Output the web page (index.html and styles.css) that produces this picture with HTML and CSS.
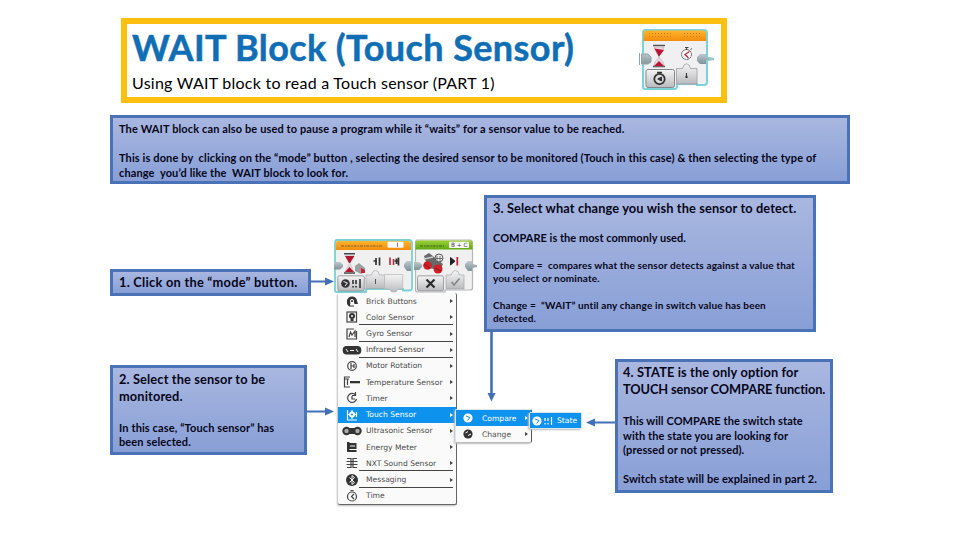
FILE: index.html
```html
<!DOCTYPE html>
<html lang="en">
<head>
    <meta charset="UTF-8">
    <meta name="viewport" content="width=device-width, initial-scale=1.0">
    <title>WAIT Block (Touch Sensor)</title>
    <link rel="stylesheet" href="styles.css">
</head>
<body>
    <div class="slide">
        <header class="header">
            <div class="titles">
                <h1>WAIT Block (Touch Sensor)</h1>
                <p class="subtitle">Using WAIT block to read a Touch sensor (PART 1)</p>
            </div>
            <svg class="wait-block" viewBox="638 26 90 68">
                <defs>
                    <linearGradient id="orange" x1="0" y1="0" x2="0" y2="1">
                        <stop offset="0" stop-color="#ffb52e"/>
                        <stop offset="1" stop-color="#f28c0c"/>
                    </linearGradient>
                    <linearGradient id="green" x1="0" y1="0" x2="0" y2="1">
                        <stop offset="0" stop-color="#9bd136"/>
                        <stop offset="1" stop-color="#5fa814"/>
                    </linearGradient>
                    <linearGradient id="grey" x1="0" y1="0" x2="0" y2="1">
                        <stop offset="0" stop-color="#f4f4f4"/>
                        <stop offset=".5" stop-color="#d9d9db"/>
                        <stop offset="1" stop-color="#b9babd"/>
                    </linearGradient>
                    <linearGradient id="plug" x1="0" y1="0" x2="0" y2="1">
                        <stop offset="0" stop-color="#bfc9cd"/>
                        <stop offset="1" stop-color="#7f9198"/>
                    </linearGradient>
                </defs>
                <path d="M645 30H704Q707 30 707 33V82Q707 85 704 85H697V84H677V87Q677 89 674 89H645Q643 89 643 87V33Q643 30 645 30Z" fill="#f0f0f2" stroke="#79d3d8" stroke-width="2"/>
                <path d="M643.500 41V33Q643.500 30.500 646 30.500H703Q706 30.500 706 33V41Z" fill="url(#orange)"/>
                <path d="M649 33.500H672M649 36.500H672M684 33.500H701M684 36.500H701" stroke="#c87b1c" stroke-width="1" stroke-dasharray="1 2"/>
                <path d="M639.500 53V65M641.500 54H648L651 57V62L648 64H641.500Z" fill="url(#plug)" stroke="#90a4aa" stroke-width="1"/>
                <path d="M697 57L700 54H706V57.500L714 58V60L706 61V64H700L697 61Z" fill="url(#plug)"/>
                <path d="M706 57L714 58.500L706 61" fill="none" stroke="#8fd3d5" stroke-width="1.200"/>
                <!-- hourglass -->
                <path d="M653 45.500H665" stroke="#555" stroke-width="1.500"/>
                <path d="M653 66.500H665" stroke="#555" stroke-width="1.500"/>
                <path d="M654 47H664L663 50L659.500 55.500V58L663 62L664 66H654L655 62L658.500 58V55.500L655 50Z" fill="#ead8df" stroke="#a9a0a5" stroke-width=".5"/>
                <path d="M654.500 48.500L664 50L659.500 56H658.500ZM654 66L659 61L664 66Z" fill="#bb1538"/>
                <!-- stopwatch -->
                <circle cx="686.500" cy="54.500" r="5" fill="#f8f8f8" stroke="#55585a" stroke-width="1" stroke-dasharray="2 .6"/>
                <path d="M685 47.500H688.500M686.500 48V50M690.500 49.500L692 48.500" stroke="#444" stroke-width="1"/>
                <path d="M689.500 51.500L685 54.500L688.500 58" fill="none" stroke="#b62a47" stroke-width="1.300"/>
                <!-- mode button -->
                <rect x="646" y="69.500" width="28.500" height="18" rx="2" fill="url(#grey)" stroke="#85878a" stroke-width="1"/>
                <circle cx="659.500" cy="79" r="5.200" fill="#d9d9d9" stroke="#333" stroke-width="1.800"/>
                <path d="M657 72.500H662M659.500 72.500V74" stroke="#333" stroke-width="1.400"/>
                <path d="M661.500 77L657.800 79L661.500 81Z" fill="#333" stroke="#333"/>
                <path d="M676.500 68.500H682.500L684 65Q686.500 62.500 689 65L690.500 68.500H697V84H676.500Z" fill="url(#grey)" stroke="#9a9da0" stroke-width=".8"/>
                <path d="M686.500 73V78M685 77H688" stroke="#333" stroke-width="1.100"/>
            </svg>
        </header>

        <section class="callout intro">
            <p class="md">The WAIT block can also be used to pause a program while it “waits” for a sensor value to be reached.</p>
            <p class="md gap">This is done by&nbsp; clicking on the “mode” button , selecting the desired sensor to be monitored (Touch in this case) &amp; then selecting the type of<br>change&nbsp; you’d like the&nbsp; WAIT block to look for.</p>
        </section>

        <main class="steps">
            <div class="left">
                <section class="callout step1">
                    <p class="lg">1. Click on the “mode” button.</p>
                </section>
                <section class="callout step2">
                    <p class="lg">2. Select the sensor to be<br>monitored.</p>
                    <p class="md gap">In this case, “Touch sensor” has<br>been selected.</p>
                </section>
            </div>

            <div class="program">
                <svg class="blocks" viewBox="330 236 152 57">
                    <!-- wait block -->
                    <path d="M337 240H409Q412 240 412 243V288Q412 290.500 409 290.500H403V289H366V292H337Q335 292 335 290V243Q335 240 337 240Z" fill="#f0f0f1" stroke="#7bd0d3" stroke-width="1.800"/>
                    <path d="M335.800 250V243Q335.800 241 338 241H409Q411 241 411 243V250Z" fill="url(#orange)"/>
                    <path d="M341 246H383" stroke="#a9762c" stroke-width="1.300" stroke-dasharray="3 1 1.500 .800"/>
                    <rect x="387.500" y="241.700" width="16" height="6" rx="1" fill="#fafafa"/>
                    <path d="M397.500 242.800V246.800" stroke="#555" stroke-width=".8"/>
                    <path d="M334 262H340L343 264.500V267L340 269.500H334Z" fill="url(#plug)"/>
                    <path d="M404 264L407 261H411V271H407L404 267Z" fill="url(#plug)"/>
                    <path d="M344 253.800H355M344 273H355" stroke="#444" stroke-width="1.500"/>
                    <path d="M345 255H354L350.500 262V264L354 272H345L349 264V262Z" fill="#ecdce1" stroke="#aaa" stroke-width=".4"/>
                    <path d="M345 256H354.500L350 263H349ZM345 272L349.500 267L354 272Z" fill="#b3152f"/>
                    <path d="M355 266L359 263L365 268V272L361 274L355 271Z" fill="#9d9ea0"/>
                    <path d="M361 268L365 270V273L361 273Z" fill="#c52336"/>
                    <path d="M373.500 261H377M376 258V265M379.500 257.500V265.500" stroke="#333" stroke-width="1.700"/>
                    <path d="M390 257.500V265M393.500 259V265" stroke="#b52a3c" stroke-width="1.600"/>
                    <path d="M394.500 261H398M396.500 258.500V264M398.500 257.500V265.500" fill="none" stroke="#333" stroke-width="1.700"/>
                    <rect x="337.800" y="275.800" width="26.500" height="15" rx="1.500" fill="url(#grey)" stroke="#8c8e90" stroke-width=".8"/>
                    <circle cx="345.500" cy="283.500" r="4.300" fill="#333"/>
                    <path d="M343.500 281.500L347.500 283L345 286" fill="none" stroke="#eee" stroke-width="1"/>
                    <path d="M353 280V284M353 286V287.500M356 280V284M356 286V287.500M360 279V288" stroke="#333" stroke-width="1.600"/>
                    <path d="M366 275H371.500L373 271.500Q375.500 269.500 378 271.500L379.500 275H384.500V288.500H366Z" fill="url(#grey)" stroke="#a5a7a9" stroke-width=".7"/>
                    <path d="M375.500 279V284" stroke="#555" stroke-width="1"/>
                    <path d="M384.500 274.500H402.700V289H398L396 292H391.500L389.500 289H384.500Z" fill="url(#grey)" stroke="#b5b6b8" stroke-width=".7"/>
                    <!-- motor block -->
                    <path d="M417 240H470Q472.500 240 472.500 243V288Q472.500 290 470 290H445V292H418Q415.500 292 415.500 290V243Q415.500 240 417 240Z" fill="#f0f0f1" stroke="#b4b6b8" stroke-width="1.200"/>
                    <path d="M415.500 249.500V243Q415.500 240.500 418 240.500H470Q472.500 240.500 472.500 243V249.500Z" fill="url(#green)"/>
                    <path d="M420 246H444" stroke="#557d1f" stroke-width="1.300" stroke-dasharray="3 1 1.500 .8"/>
                    <rect x="449" y="241.700" width="20" height="6.300" rx="1" fill="#fafafa"/>
                    <text x="451" y="247.200" class="port">B + C</text>
                    <path d="M414 262H419L422 264.500V267L419 270H414Z" fill="url(#plug)"/>
                    <path d="M465 264L468 261H472V264L477 265V267L472 268V271H468L465 267Z" fill="url(#plug)"/>
                    <path d="M424 256L429 253L443 264L440 270L428 268Z" fill="#66686a"/>
                    <path d="M424 259L433 257" stroke="#ccc" stroke-width="1.500"/>
                    <circle cx="427.500" cy="265.500" r="4.300" fill="#cf2027"/>
                    <circle cx="438" cy="269" r="4.500" fill="#cf2027"/>
                    <path d="M424 264L430 268M435 268L441 271" stroke="#8f1118" stroke-width="1"/>
                    <circle cx="439" cy="258" r="4" fill="#eee" stroke="#555" stroke-width="1"/>
                    <path d="M437 256V261M436 258.500H442M440 256V261" stroke="#555" stroke-width=".8"/>
                    <path d="M450.500 257.500V265L455 261.200Z" fill="#222" stroke="#222"/>
                    <path d="M457.300 257V265.500" stroke="#c0253d" stroke-width="1.800"/>
                    <rect x="417.500" y="275.800" width="26" height="15" rx="1.500" fill="url(#grey)" stroke="#8c8e90" stroke-width=".8"/>
                    <path d="M426.500 279.500L434.500 287.500M434.500 279.500L426.500 287.500" stroke="#2b2b2b" stroke-width="2.200"/>
                    <path d="M446 275H451L453 271.500Q455.500 269.500 458 271.500L459.500 275H464V289H446Z" fill="url(#grey)" stroke="#a5a7a9" stroke-width=".7"/>
                    <path d="M451.500 282L454 285L459.500 278.500" fill="none" stroke="#85878a" stroke-width="1.700"/>
                </svg>

                <ul class="menu">
                    <li><svg viewBox="0 0 20 16"><path d="M5 8A5 4.500 0 0 1 15 8L16 11H12.500L12 9H8.500L8 12.500H12V13.500H7L5 11Z"/><circle class="wf" cx="10" cy="8" r="2"/><circle cx="10" cy="8" r="1"/></svg><span>Brick Buttons</span></li>
                    <li class="line"><svg viewBox="0 0 20 16"><rect class="s" x="5" y="3" width="9.500" height="10"/><circle cx="10" cy="7" r="3"/><path d="M8.500 10H11.500V12H8.500Z"/><circle class="wf" cx="10" cy="7" r="1"/></svg><span>Color Sensor</span></li>
                    <li class="line"><svg viewBox="0 0 20 16"><path class="s" d="M14.500 5V13H5V3H12M7 11L8.500 6L10 9L13 5V11"/></svg><span>Gyro Sensor</span></li>
                    <li class="line"><svg viewBox="0 0 20 16"><rect x=".7" y="4" width="18.600" height="8.500" rx="4"/><path class="w" d="M4 7L6 10M14 7L16 10M8 8.500H12"/></svg><span>Infrared Sensor</span></li>
                    <li><svg viewBox="0 0 20 16"><circle class="s" cx="10" cy="8" r="4.300"/><path class="s" d="M9 5V8H12M9 8V11M12 6V10"/></svg><span>Motor Rotation</span></li>
                    <li><svg viewBox="0 0 20 16"><path class="s" d="M8 3H2.500V13H8M3 5H7M5.500 5V11"/><path d="M8 7H18V9.300H8Z"/></svg><span>Temperature Sensor</span></li>
                    <li><svg viewBox="0 0 20 16"><path class="s" d="M13.500 5A4.500 4.500 0 1 0 14.500 9M13.500 2V5.500H10M10 6V9H13"/></svg><span>Timer</span></li>
                    <li class="active"><svg viewBox="0 0 20 16"><path class="s" d="M5.500 3V13H15M14.500 5V10M10 3V12M6 7.500H14"/><circle cx="10" cy="7.500" r="3"/><circle class="bf" cx="10" cy="7.500" r="1"/></svg><span>Touch Sensor</span></li>
                    <li><svg viewBox="0 0 20 16"><circle cx="4.500" cy="8" r="4.200"/><circle cx="15.500" cy="8" r="4.200"/><path d="M7 5H13V11H7Z"/><circle class="gf" cx="4.500" cy="8" r="2.200"/><circle class="gf" cx="15.500" cy="8" r="2.200"/></svg><span>Ultrasonic Sensor</span></li>
                    <li><svg viewBox="0 0 20 16"><path d="M5 3H7.500V4H14.500V10H7.500V11H14.500V13H5Z"/><path class="w" d="M8 7H13"/></svg><span>Energy Meter</span></li>
                    <li class="line"><svg viewBox="0 0 20 16"><path class="s" d="M5 3.500H9V12.500H5M15 3.500H11V12.500H15M4.500 6.500H15.500M4.500 9.500H15.500"/></svg><span>NXT Sound Sensor</span></li>
                    <li class="line"><svg viewBox="0 0 20 16"><circle cx="10" cy="8" r="6"/><path class="w" d="M7.500 5.500L12.500 10.500L10 12.500V3.500L12.500 5.500L7.500 10.500"/></svg><span>Messaging</span></li>
                    <li class="leaf"><svg viewBox="0 0 20 16"><circle class="s" cx="10" cy="8.500" r="4.500"/><path class="s" d="M8.500 2.500H11.500M12 6L9.500 8.500L12 11"/></svg><span>Time</span></li>
                </ul>

                <ul class="menu submenu">
                    <li class="active"><svg viewBox="0 0 20 16"><circle cx="10" cy="8" r="4.600"/><path class="b" d="M8 6L12 7.500L9.500 10.500"/></svg><span>Compare</span></li>
                    <li><svg viewBox="0 0 20 16"><circle cx="10" cy="8" r="4.600"/><path class="w" d="M7.500 7L10 5.500M10 9.500L13 8"/></svg><span>Change</span></li>
                </ul>
                <ul class="menu statemenu">
                    <li class="active leaf"><svg viewBox="0 0 24 16"><circle cx="6" cy="8" r="4.600"/><path class="b" d="M4 6L8 7.500L5.500 10.500"/><path class="s" d="M14 5V8M14 10V11.500M17 5V8M17 10V11.500M20.500 4V12"/></svg><span>State</span></li>
                </ul>
            </div>

            <div class="right">
                <section class="callout step3">
                    <p class="lg">3. Select what change you wish the sensor to detect.</p>
                    <p class="md">COMPARE is the most commonly used.</p>
                    <p class="sm">Compare =&nbsp; compares what the sensor detects against a value that<br>you select or nominate.</p>
                    <p class="sm">Change =&nbsp; “WAIT” until any change in switch value has been<br>detected.</p>
                </section>
                <section class="callout step4">
                    <p class="lg">4. STATE is the only option for<br><span class="caps">TOUCH sensor COMPARE function.</span></p>
                    <p class="md gap">This will COMPARE the switch state<br>with the state you are looking for<br>(pressed or not pressed).</p>
                    <p class="md gap">Switch state will be explained in part 2.</p>
                </section>
            </div>
        </main>

        <svg class="arrows" viewBox="0 0 960 540">
            <path class="shaft" d="M311 281.500H327M307 411.500H327M615 422.500H593"/>
            <path class="shaft thick" d="M491.500 331V396"/>
            <path d="M325 277.500L334 281.500L325 285.500ZM325 407.500L334 411.500L325 415.500ZM595 418.500L586 422.500L595 426.500ZM487.500 393H495.500L491.500 401.500Z"/>
        </svg>
    </div>
</body>
</html>
```
FILE: styles.css
```css
body {
    margin: 0;
    background-color: #fff;
    font-family: Lato, "Liberation Sans", sans-serif;
    font-variant-ligatures: none;
    color: #000;
}
h1, p, ul {
    margin: 0;
    padding: 0;
}
.slide {
    position: relative;
    box-sizing: border-box;
    width: 960px;
    height: 540px;
    padding: 18px 110px 0;
    overflow: hidden;
}
.header {
    display: flex;
    justify-content: space-between;
    box-sizing: border-box;
    width: 606px;
    height: 85px;
    margin-left: 11px;
    padding: 2px 0 0 5px;
    border: 6px solid #fdc010;
}
.titles {
    margin-top: -2px;
}
h1 {
    font-size: 36px;
    line-height: 46px;
    letter-spacing: 0.4px;
    color: #106eb4;
    -webkit-text-stroke: 0.5px #106eb4;
    white-space: nowrap;
}
.subtitle {
    margin-top: 3px;
    font-size: 16px;
    line-height: 20px;
    letter-spacing: 0.25px;
    white-space: nowrap;
}
.wait-block {
    width: 90px;
    height: 68px;
    margin-right: -7px;
}

/* blue text boxes */
.callout {
    box-sizing: border-box;
    padding: 4px 6px;
    border: 3px solid #4a73b7;
    background: linear-gradient(#a9b7e0, #889fd6);
    font-weight: bold;
    color: #06061a;
    white-space: nowrap;
}
.lg {
    font-size: 12.8px;
    line-height: 17px;
    letter-spacing: 0.13px;
}
.md {
    font-size: 11px;
    line-height: 14.5px;
    letter-spacing: 0.12px;
}
.sm {
    font-size: 10px;
    line-height: 13px;
    letter-spacing: 0.14px;
}
.gap {
    margin-top: 14.5px;
}
.intro {
    width: 740px;
    height: 69px;
    margin-top: 12px;
}
.steps {
    display: grid;
    grid-template-columns: 220px 154px 1fr;
    margin-top: 11px;
}
.step1 {
    width: 201px;
    height: 27px;
    margin-top: 74px;
    padding-top: 2px;
}
.step1 .lg {
    letter-spacing: 0.26px;
}
.step2 {
    width: 197px;
    height: 90px;
    margin-top: 69px;
    padding-top: 3px;
}
.step2 .gap {
    margin-top: 15.5px;
}
.step3 {
    width: 332px;
    height: 137px;
    padding-top: 2px;
}
.step3 .md {
    margin-top: 14px;
    letter-spacing: 0.03px;
}
.step3 .sm {
    margin-top: 13px;
}
.step3 .sm + .sm {
    margin-top: 14px;
}
.step4 {
    width: 218px;
    height: 134px;
    margin: 27px 0 0 131px;
    padding: 2px 5px;
}
.step4 .md {
    letter-spacing: 0.09px;
}
.step4 .lg + .gap {
    margin-top: 16px;
}
.caps {
    letter-spacing: -0.1px;
}

/* EV3 blocks and the mode menu */
.program {
    position: relative;
    padding-top: 41px;
}
.blocks {
    display: block;
    width: 152px;
    height: 57px;
}
.port {
    font: 5.8px "DejaVu Sans", sans-serif;
    fill: #444;
}
.menu {
    box-sizing: border-box;
    width: 119px;
    margin-left: 8px;
    list-style: none;
    background-color: #fafafa;
    border: solid #666;
    border-width: 0 1px 1px 0;
    border-radius: 2px;
    box-shadow: -1px 1px 2px #bbb;
    font: 7.6px "DejaVu Sans", sans-serif;
    color: #4c4c4c;
}
.menu li {
    position: relative;
    display: flex;
    align-items: center;
    height: 16.23px;
    padding-left: 4px;
    fill: #333;
}
.menu li svg {
    flex: none;
    width: 20px;
    height: 16px;
    margin-right: 4px;
}
.menu li span {
    flex: 1;
    white-space: nowrap;
}
.menu li::after {
    content: "";
    margin-right: 3px;
    border: solid transparent;
    border-width: 2px 0 2px 3px;
    border-left-color: #444;
}
.menu .leaf::after {
    display: none;
}
.menu .line::before {
    content: "";
    position: absolute;
    left: 21px;
    right: 3px;
    bottom: 0;
    height: 1px;
    background-color: #444;
}
.menu .active {
    background-color: #0d92ee;
    color: #fff;
    fill: #fff;
}
.menu .active::after {
    border-left-color: #fff;
}
.menu .s {
    fill: none;
    stroke: #444;
    stroke-width: 1.2;
}
.menu .active .s {
    stroke: #fff;
}
.menu .w {
    fill: none;
    stroke: #fafafa;
    stroke-width: 1;
}
.menu .b {
    fill: none;
    stroke: #0d92ee;
    stroke-width: 1;
}
.menu .wf {
    fill: #fafafa;
}
.menu .bf {
    fill: #0d92ee;
}
.menu .gf {
    fill: #aaa;
}
.submenu {
    position: absolute;
    left: 125px;
    top: 214px;
    width: 77px;
    margin: 0;
    border-width: 1px;
    border-color: #dde6ea #555 #bbb #dde6ea;
    z-index: 1;
}
.submenu li {
    padding-left: 2px;
}
.statemenu {
    position: absolute;
    left: 199px;
    top: 217px;
    width: 53px;
    margin: 0;
    border-width: 1px;
    border-color: #dde6ea;
    z-index: 2;
}
.statemenu li {
    height: 15px;
    padding-left: 1px;
}
.menu.statemenu li svg {
    width: 24px;
    margin-right: 2px;
}

.arrows {
    position: absolute;
    left: 0;
    top: 0;
    width: 960px;
    height: 540px;
    fill: #4270b8;
    pointer-events: none;
}
.shaft {
    stroke: #4270b8;
    stroke-width: 2;
}
.thick {
    stroke-width: 2.6;
}
```
